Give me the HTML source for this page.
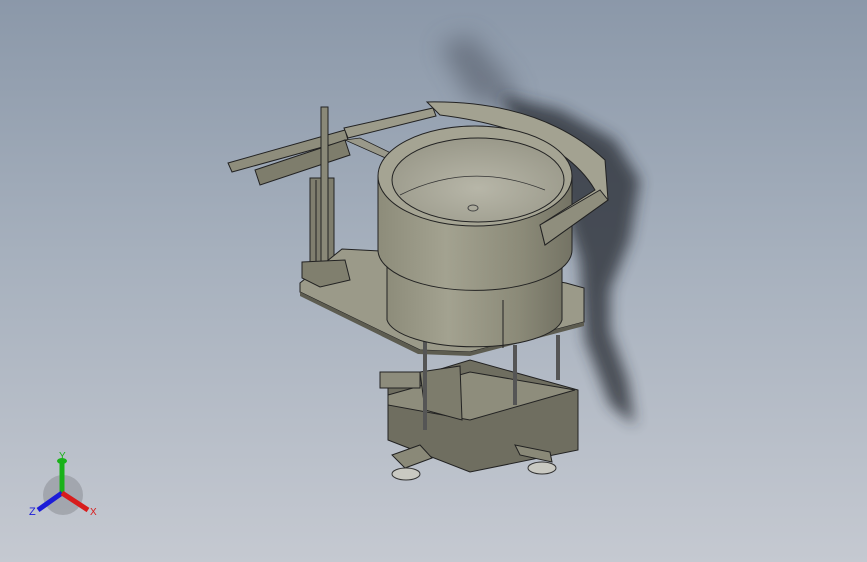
<!DOCTYPE html>
<html><head><style>
html,body{margin:0;padding:0;width:867px;height:562px;overflow:hidden}
body{background:linear-gradient(180deg,#8b98a9 0%,#a6b0bd 45%,#c5c9d1 100%);font-family:"Liberation Sans",sans-serif}
</style></head><body>
<svg width="867" height="562" viewBox="0 0 867 562" xmlns="http://www.w3.org/2000/svg">
<defs>
<filter id="b" x="-30%" y="-30%" width="160%" height="160%"><feGaussianBlur stdDeviation="12"/></filter>
<filter id="b2" x="-30%" y="-30%" width="160%" height="160%"><feGaussianBlur stdDeviation="7"/></filter>
<linearGradient id="cyl" x1="0" x2="1"><stop offset="0" stop-color="#8d8c7a"/><stop offset="0.35" stop-color="#a3a290"/><stop offset="0.75" stop-color="#8b8a78"/><stop offset="1" stop-color="#747364"/></linearGradient>
<radialGradient id="inner" cx="0.5" cy="0.6" r="0.6"><stop offset="0" stop-color="#b7b6a8"/><stop offset="1" stop-color="#9a998a"/></radialGradient>
</defs>
<!-- shadow -->
<path d="M440,45 L470,35 L510,80 L520,110 L470,100 Z" fill="#4a505c" opacity="0.5" filter="url(#b)"/>
<path d="M500,95 L560,110 L615,140 L640,180 L630,240 L610,290 L610,330 L628,380 L635,425 L610,405 L585,340 L580,260 L560,200 Z" fill="#262a32" opacity="0.75" filter="url(#b2)"/>
<!-- arm / feeder -->
<polygon points="228,163 345,130 348,140 232,172" fill="#8e8d7c" stroke="#222" stroke-width="1"/>
<polygon points="255,170 345,140 350,155 260,185" fill="#7e7d6c" stroke="#222" stroke-width="1"/>
<polygon points="344,128 433,108 436,116 348,138" fill="#9c9b8a" stroke="#222" stroke-width="1"/>
<polygon points="345,140 360,138 395,155 390,160" fill="#9a998a" stroke="#222" stroke-width="0.8"/>
<rect x="310" y="178" width="24" height="90" fill="#7f7e6e" stroke="#222" stroke-width="1"/>
<rect x="321" y="107" width="7" height="160" fill="#8a8978" stroke="#222" stroke-width="1"/>
<line x1="316" y1="180" x2="316" y2="266" stroke="#222"/>
<!-- plate -->
<polygon points="300,283 342,249 380,251 566,283 584,288 584,322 470,352 420,350 300,292" fill="#9b9a89" stroke="#222" stroke-width="1"/>
<polygon points="300,292 420,350 470,352 584,322 584,326 470,356 418,354 300,296" fill="#5d5c50"/>
<polygon points="302,262 345,260 350,280 320,287 302,278" fill="#807f6e" stroke="#222"/>
<!-- base assembly -->
<polygon points="388,385 470,360 578,390 578,450 470,472 388,440" fill="#6f6e60" stroke="#222"/>
<polygon points="388,395 470,372 575,390 470,420 388,405" fill="#8e8d7c" stroke="#222"/>
<polygon points="420,372 460,366 462,420 425,410" fill="#7d7c6c" stroke="#222"/>
<rect x="380" y="372" width="40" height="16" fill="#8d8c7c" stroke="#222"/>
<line x1="425" y1="330" x2="425" y2="430" stroke="#555" stroke-width="4"/>
<line x1="515" y1="345" x2="515" y2="405" stroke="#555" stroke-width="4"/>
<line x1="558" y1="335" x2="558" y2="380" stroke="#555" stroke-width="4"/>
<polygon points="392,455 420,445 432,458 405,468" fill="#8a8978" stroke="#222"/>
<polygon points="515,445 550,452 552,462 520,455" fill="#8a8978" stroke="#222"/>
<ellipse cx="406" cy="474" rx="14" ry="6" fill="#c9c9c2" stroke="#333"/>
<ellipse cx="542" cy="468" rx="14" ry="6" fill="#c9c9c2" stroke="#333"/>
<!-- bowl cylinder -->
<path d="M387,228 L387,320 A88,30 0 0 0 562,320 L562,228 Z" fill="url(#cyl)" stroke="#222" stroke-width="1"/>
<line x1="503" y1="300" x2="503" y2="348" stroke="#222"/>
<path d="M378,176 L378,250 A96,40 0 0 0 572,250 L572,176 Z" fill="url(#cyl)" stroke="#222"/>
<!-- shroud -->
<path d="M427,102 Q540,100 605,160 L608,200 L545,245 L540,225 L595,190 Q560,130 440,115 Z" fill="#a3a291" stroke="#222"/>
<polygon points="540,225 600,190 608,200 545,245" fill="#8f8e7d" stroke="#222"/>
<!-- bowl top -->
<ellipse cx="475" cy="176" rx="97" ry="50" fill="#a5a493" stroke="#222"/>
<ellipse cx="478" cy="180" rx="86" ry="42" fill="url(#inner)" stroke="#222"/>
<path d="M400,195 Q470,160 545,190" fill="none" stroke="#333" stroke-width="0.8"/>
<ellipse cx="473" cy="208" rx="5" ry="3" fill="none" stroke="#444"/>
<!-- triad -->
<g>
<ellipse cx="63" cy="495" rx="20" ry="20" fill="#909399" opacity="0.6"/>
<line x1="62" y1="493" x2="62" y2="463" stroke="#19b219" stroke-width="5"/>
<ellipse cx="62" cy="461" rx="5" ry="3" fill="#19b219"/>
<line x1="62" y1="493" x2="38" y2="510" stroke="#1c1cd8" stroke-width="5"/>
<line x1="62" y1="493" x2="88" y2="510" stroke="#d81c1c" stroke-width="5"/>
<text x="59" y="459" font-size="10" fill="#19b219">Y</text>
<text x="29" y="515" font-size="11" fill="#1c1cd8">Z</text>
<text x="90" y="515" font-size="10" fill="#d81c1c">X</text>
</g>
</svg>
</body></html>
